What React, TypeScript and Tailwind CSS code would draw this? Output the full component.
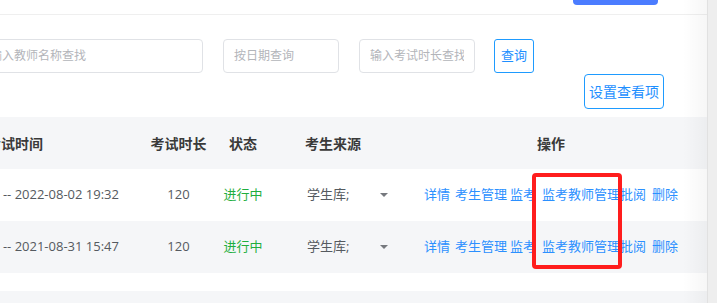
const rows = [
  { time: '2022-08-01 19:32 -- 2022-08-02 19:32', len: '120', status: '进行中', source: '学生库;', bg: 'bg-white' },
  { time: '2021-08-30 15:47 -- 2021-08-31 15:47', len: '120', status: '进行中', source: '学生库;', bg: 'bg-[#f5f6f8]' },
];

function OpLinks() {
  return (
    <div className="flex w-[308px] justify-center whitespace-nowrap text-[13px] text-[#2b90ff]">
      <span>详情</span>
      <span className="ml-[5px]">考生管理</span>
      <span className="ml-[3px]">监考</span>
      <span className="ml-[6px]">监考教师管理</span>
      <span>批阅</span>
      <span className="ml-[6px]">删除</span>
    </div>
  );
}

export default function App() {
  return (
    <div className="flex h-[303px] w-[717px] overflow-hidden bg-white font-['Open_Sans','Noto_Sans_CJK_SC',sans-serif]">
      <div className="relative flex-1 overflow-hidden">
        {/* top bar */}
        <div className="flex h-[15px] justify-end border-b border-[#efefef] pr-[49px]">
          <div className="h-[5px] w-[85px] rounded-b-[4px] bg-[#4b7cff]" />
        </div>

        {/* filters */}
        <div className="mt-[24px] -ml-[21px] flex h-[34px] items-stretch">
          <input
            readOnly
            placeholder="输入教师名称查找"
            className="w-[224px] rounded-[4px] border border-[#e0e2e6] px-[10px] text-[12px] outline-none placeholder:text-[#b3b5ba]"
          />
          <input
            readOnly
            placeholder="按日期查询"
            className="ml-[20px] w-[116px] rounded-[4px] border border-[#e0e2e6] px-[10px] text-[12px] outline-none placeholder:text-[#b3b5ba]"
          />
          <input
            readOnly
            placeholder="输入考试时长查找"
            className="ml-[20px] w-[116px] rounded-[4px] border border-[#e0e2e6] px-[10px] text-[12px] outline-none placeholder:text-[#b3b5ba]"
          />
          <button className="ml-[19px] w-[40px] rounded-[3px] border border-[#1e9bff] text-[13px] text-[#1e8fff]">
            查询
          </button>
        </div>

        <div className="mt-[1px] flex justify-end pr-[43px]">
          <button className="h-[35px] w-[80px] rounded-[4px] border border-[#1e9bff] text-[14px] text-[#1e8fff]">
            设置查看项
          </button>
        </div>

        {/* table */}
        <div className="relative mt-[8px]">
          <div className="-ml-[116px] flex h-[52px] items-center bg-[#f5f6f8] text-[14px] font-semibold text-[#3a3a3a]">
            <div className="w-[256px] pl-[103px]">考试时间</div>
            <div className="w-[77px] text-center">考试时长</div>
            <div className="w-[52px] text-center">状态</div>
            <div className="w-[128px] text-center">考生来源</div>
            <div className="w-[308px] text-center">操作</div>
          </div>

          {rows.map((r, i) => (
            <div key={i} className={`-ml-[116px] flex h-[52px] items-center text-[13px] text-[#555a60] ${r.bg}`}>
              <div className="w-[256px] whitespace-nowrap pr-[21px] text-right">{r.time}</div>
              <div className="w-[77px] text-center">{r.len}</div>
              <div className="w-[52px] text-center text-[#1fae3e]">{r.status}</div>
              <div className="flex w-[128px] items-center justify-between pl-[38px] pr-[9px]">
                <span>{r.source}</span>
                <span className="h-0 w-0 border-x-[4px] border-t-[4px] border-x-transparent border-t-[#76797e]" />
              </div>
              <OpLinks />
            </div>
          ))}

          <div className="h-[18px] bg-white" />
          <div className="h-[20px] bg-[#f5f6f8]" />

          {/* highlight */}
          <div className="pointer-events-none absolute left-[532px] top-[56px] h-[96px] w-[90px] rounded-[4px] border-[4px] border-[#ff1d1d]" />
        </div>

        <div className="pointer-events-none absolute right-0 top-0 h-full w-[24px] bg-gradient-to-r from-transparent to-[rgba(0,0,0,0.035)]" />
      </div>
      <div className="w-[10px] border-l border-[#e1e1e1] bg-[#eeeeee]" />
    </div>
  );
}
